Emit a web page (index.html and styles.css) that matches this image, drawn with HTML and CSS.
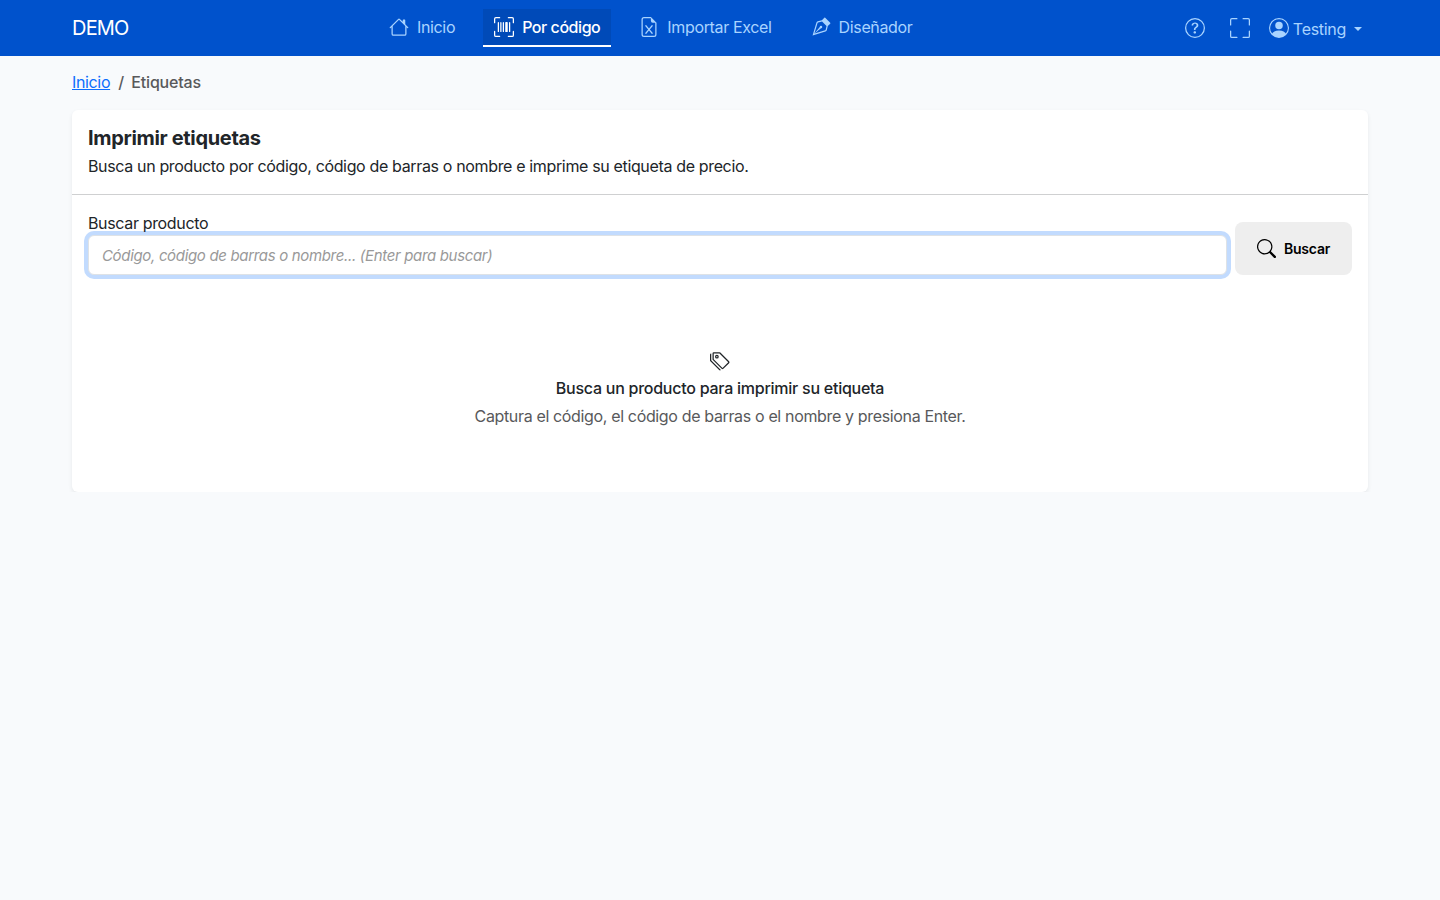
FILE: index.html
```html
<!DOCTYPE html>
<html lang="es">
<head>
    <meta charset="UTF-8">
    <meta name="viewport" content="width=device-width, initial-scale=1.0">
    <title>Imprimir etiquetas | DEMO</title>
    <link rel="stylesheet" href="styles.css">
</head>
<body>

<header class="navbar">
    <div class="container navbar-inner">
        <a class="brand" href="#">DEMO</a>

        <nav class="nav-links">
            <a class="nav-link" href="#">
                <svg class="icon" viewBox="0 0 16 16"><path d="M8.707 1.5a1 1 0 0 0-1.414 0L.646 8.146a.5.5 0 0 0 .708.708L2 8.207V13.5A1.5 1.5 0 0 0 3.5 15h9a1.5 1.5 0 0 0 1.5-1.5V8.207l.646.647a.5.5 0 0 0 .708-.708L13 5.793V2.5a.5.5 0 0 0-.5-.5h-1a.5.5 0 0 0-.5.5v1.293zM13 7.207V13.5a.5.5 0 0 1-.5.5h-9a.5.5 0 0 1-.5-.5V7.207l5-5z"/></svg>
                <span>Inicio</span>
            </a>
            <a class="nav-link active" href="#">
                <svg class="icon" viewBox="0 0 16 16"><path d="M1.5 1a.5.5 0 0 0-.5.5v3a.5.5 0 0 1-1 0v-3A1.5 1.5 0 0 1 1.5 0h3a.5.5 0 0 1 0 1zM11 .5a.5.5 0 0 1 .5-.5h3A1.5 1.5 0 0 1 16 1.5v3a.5.5 0 0 1-1 0v-3a.5.5 0 0 0-.5-.5h-3a.5.5 0 0 1-.5-.5M.5 11a.5.5 0 0 1 .5.5v3a.5.5 0 0 0 .5.5h3a.5.5 0 0 1 0 1h-3A1.5 1.5 0 0 1 0 14.5v-3a.5.5 0 0 1 .5-.5m15 0a.5.5 0 0 1 .5.5v3a1.5 1.5 0 0 1-1.5 1.5h-3a.5.5 0 0 1 0-1h3a.5.5 0 0 0 .5-.5v-3a.5.5 0 0 1 .5-.5M3 4.5a.5.5 0 0 1 1 0v7a.5.5 0 0 1-1 0zm2 0a.5.5 0 0 1 1 0v7a.5.5 0 0 1-1 0zm2 0a.5.5 0 0 1 1 0v7a.5.5 0 0 1-1 0zm2 0a.5.5 0 0 1 .5-.5h1a.5.5 0 0 1 .5.5v7a.5.5 0 0 1-.5.5h-1a.5.5 0 0 1-.5-.5zm3 0a.5.5 0 0 1 1 0v7a.5.5 0 0 1-1 0z"/></svg>
                <span>Por código</span>
            </a>
            <a class="nav-link" href="#">
                <svg class="icon" viewBox="0 0 16 16"><path d="M5.884 6.68a.5.5 0 1 0-.768.64L7.349 10l-2.233 2.68a.5.5 0 0 0 .768.64L8 10.781l2.116 2.54a.5.5 0 0 0 .768-.641L8.651 10l2.233-2.68a.5.5 0 0 0-.768-.64L8 9.219l-2.116-2.54z"/><path d="M14 14V4.5L9.5 0H4a2 2 0 0 0-2 2v12a2 2 0 0 0 2 2h8a2 2 0 0 0 2-2M9.5 3A1.5 1.5 0 0 0 11 4.5h2V14a1 1 0 0 1-1 1H4a1 1 0 0 1-1-1V2a1 1 0 0 1 1-1h5.5z"/></svg>
                <span>Importar Excel</span>
            </a>
            <a class="nav-link" href="#">
                <svg class="icon" viewBox="0 0 16 16" fill-rule="evenodd"><path d="M10.646.646a.5.5 0 0 1 .708 0l4 4a.5.5 0 0 1 0 .708l-1.902 1.902-.829 3.313a1.5 1.5 0 0 1-1.024 1.073L1.254 14.746 4.358 4.4A1.5 1.5 0 0 1 5.43 3.377l3.313-.828zm-1.8 2.908-3.173.793a.5.5 0 0 0-.358.342l-2.57 8.565 8.567-2.57a.5.5 0 0 0 .34-.357l.794-3.174-3.6-3.6z"/><path d="M2.832 13.228 8 9a1 1 0 1 0-1-1l-4.228 5.168-.026.086z"/></svg>
                <span>Diseñador</span>
            </a>
        </nav>

        <div class="nav-tools">
            <a class="tool help" href="#" title="Ayuda">
                <svg class="icon" viewBox="0 0 16 16"><path d="M8 15A7 7 0 1 1 8 1a7 7 0 0 1 0 14m0 1A8 8 0 1 0 8 0a8 8 0 0 0 0 16"/><path d="M5.255 5.786a.237.237 0 0 0 .241.247h.825c.138 0 .248-.113.266-.25.09-.656.54-1.134 1.342-1.134.686 0 1.314.343 1.314 1.168 0 .635-.374.927-.965 1.371-.673.489-1.206 1.06-1.168 1.987l.003.217a.25.25 0 0 0 .25.246h.811a.25.25 0 0 0 .25-.25v-.105c0-.718.273-.927 1.01-1.486.609-.463 1.244-.977 1.244-2.056 0-1.511-1.276-2.241-2.673-2.241-1.267 0-2.655.59-2.75 2.286m1.557 5.763c0 .533.425.927 1.01.927.609 0 1.028-.394 1.028-.927 0-.552-.42-.94-1.029-.94-.584 0-1.009.388-1.009.94"/></svg>
            </a>
            <a class="tool fullscreen" href="#" title="Pantalla completa">
                <svg class="icon" viewBox="0 0 16 16"><path d="M1.5 1a.5.5 0 0 0-.5.5v4a.5.5 0 0 1-1 0v-4A1.5 1.5 0 0 1 1.5 0h4a.5.5 0 0 1 0 1zM10 .5a.5.5 0 0 1 .5-.5h4A1.5 1.5 0 0 1 16 1.5v4a.5.5 0 0 1-1 0v-4a.5.5 0 0 0-.5-.5h-4a.5.5 0 0 1-.5-.5M.5 10a.5.5 0 0 1 .5.5v4a.5.5 0 0 0 .5.5h4a.5.5 0 0 1 0 1h-4A1.5 1.5 0 0 1 0 14.5v-4a.5.5 0 0 1 .5-.5m15 0a.5.5 0 0 1 .5.5v4a1.5 1.5 0 0 1-1.5 1.5h-4a.5.5 0 0 1 0-1h4a.5.5 0 0 0 .5-.5v-4a.5.5 0 0 1 .5-.5"/></svg>
            </a>
            <a class="tool user" href="#">
                <svg class="icon" viewBox="0 0 16 16"><path d="M11 6a3 3 0 1 1-6 0 3 3 0 0 1 6 0"/><path fill-rule="evenodd" d="M0 8a8 8 0 1 1 16 0A8 8 0 0 1 0 8m8-7a7 7 0 0 0-5.468 11.37C3.242 11.226 4.805 10 8 10s4.757 1.225 5.468 2.37A7 7 0 0 0 8 1"/></svg>
                <span class="user-name">Testing</span>
                <span class="caret"></span>
            </a>
        </div>
    </div>
</header>

<main class="container">
    <nav class="breadcrumb">
        <a href="#">Inicio</a>
        <span class="separator">/</span>
        <span class="current">Etiquetas</span>
    </nav>

    <section class="card">
        <div class="card-header">
            <h1>Imprimir etiquetas</h1>
            <p>Busca un producto por código, código de barras o nombre e imprime su etiqueta de precio.</p>
        </div>

        <div class="card-body">
            <form class="search-form">
                <div class="field">
                    <label for="search">Buscar producto</label>
                    <input id="search" type="text" placeholder="Código, código de barras o nombre... (Enter para buscar)">
                </div>
                <button class="search-btn" type="button">
                    <svg class="icon" viewBox="0 0 16 16"><path d="M11.742 10.344a6.5 6.5 0 1 0-1.397 1.398h-.001q.044.06.098.115l3.85 3.85a1 1 0 0 0 1.415-1.414l-3.85-3.85a1 1 0 0 0-.115-.1zM12 6.5a5.5 5.5 0 1 1-11 0 5.5 5.5 0 0 1 11 0"/></svg>
                    <span>Buscar</span>
                </button>
            </form>

            <div class="empty-state">
                <svg class="icon" viewBox="0 0 16 16"><path d="M3 2v4.586l7 7L14.586 9l-7-7zM2 2a1 1 0 0 1 1-1h4.586a1 1 0 0 1 .707.293l7 7a1 1 0 0 1 0 1.414l-4.586 4.586a1 1 0 0 1-1.414 0l-7-7A1 1 0 0 1 2 6.586z"/><path d="M5.5 5a.5.5 0 1 1 0-1 .5.5 0 0 1 0 1m0 1a1.5 1.5 0 1 0 0-3 1.5 1.5 0 0 0 0 3M1 7.086a1 1 0 0 0 .293.707L8.75 15.25l-.043.043a1 1 0 0 1-1.414 0l-7-7A1 1 0 0 1 0 7.586V3a1 1 0 0 1 1-1z"/></svg>
                <h2>Busca un producto para imprimir su etiqueta</h2>
                <p>Captura el código, el código de barras o el nombre y presiona Enter.</p>
            </div>
        </div>
    </section>
</main>

</body>
</html>
```
FILE: styles.css
```css
* {
    box-sizing: border-box;
}

body {
    margin: 0;
    font-family: Inter, "Liberation Sans", sans-serif;
    font-size: 16px;
    line-height: 24px;
    letter-spacing: -0.35px;
    color: #212529;
    background-color: #f8fafc;
}

h1, h2, p {
    margin: 0;
}

.container {
    width: 1296px;
    margin: 0 auto;
}

.icon {
    display: block;
    flex: none;
    width: 20px;
    height: 20px;
    fill: currentColor;
}

/* Navbar */
.navbar {
    height: 56px;
    background-color: #0052cc;
}

.navbar-inner {
    display: grid;
    grid-template-columns: 306px 1fr auto;
    height: 56px;
}

.navbar a {
    color: #a9d4ff;
    text-decoration: none;
}

.navbar .brand {
    align-self: center;
    font-size: 20px;
    letter-spacing: -0.8px;
    color: #fff;
}

.nav-links {
    display: flex;
    align-items: center;
    gap: 17px;
}

.nav-link {
    display: flex;
    align-items: center;
    gap: 8px;
    height: 38px;
    padding: 0 11px;
    border-bottom: 2px solid transparent;
}

.navbar .nav-link.active {
    color: #fff;
    font-weight: 500;
    letter-spacing: -0.45px;
    background-color: #004ab8;
    border-bottom-color: #fff;
}

.nav-tools {
    display: flex;
    align-items: center;
    padding: 0 6px 1px 0;
}

.help {
    margin-right: 25px;
}

.fullscreen {
    margin-right: 19px;
}

.user {
    display: flex;
    align-items: center;
}

.user-name {
    margin: 3px 8px 0 4px;
    letter-spacing: -0.3px;
}

.caret {
    margin-top: 3px;
    border-top: 4px solid;
    border-left: 4px solid transparent;
    border-right: 4px solid transparent;
}

/* Breadcrumb */
.breadcrumb {
    display: flex;
    gap: 8px;
    padding: 14px 0 16px;
    color: #58595b;
}

.breadcrumb a {
    color: #0d6efd;
}

.breadcrumb .separator {
    font-weight: 500;
    letter-spacing: -0.7px;
}

.breadcrumb .current {
    font-weight: 500;
    letter-spacing: -0.2px;
}

/* Card */
.card {
    height: 382px;
    background-color: #fff;
    border-radius: 6px;
    box-shadow: 0 2px 4px rgba(0, 0, 0, 0.075);
}

.card-header {
    height: 85px;
    padding: 16px 16px 0;
    border-bottom: 1px solid #cfd0d1;
}

.card-header h1 {
    margin-bottom: 4px;
    font-size: 20px;
    font-weight: 700;
    line-height: 24px;
    letter-spacing: -0.33px;
}

.card-body {
    padding: 16px;
}

.search-form {
    display: flex;
    align-items: flex-end;
    gap: 8px;
}

.field {
    flex: 1;
}

.field label {
    display: block;
}

.field input {
    display: block;
    width: 100%;
    height: 40px;
    padding: 1px 13px 0;
    font: inherit;
    font-size: 15px;
    letter-spacing: -0.33px;
    border: 1px solid #dee2e6;
    border-radius: 6px;
    outline: none;
    box-shadow: 0 0 0 4px #c2dbfe;
}

.field input::placeholder {
    color: #999;
    font-style: italic;
}

.search-btn {
    display: flex;
    align-items: center;
    justify-content: center;
    gap: 8px;
    width: 117px;
    height: 53px;
    padding: 0;
    font-family: inherit;
    font-size: 14px;
    font-weight: 600;
    letter-spacing: -0.2px;
    color: #000;
    background-color: #eee;
    border: none;
    border-radius: 8px;
}

.search-btn .icon {
    width: 19px;
    height: 19px;
}

/* Empty state */
.empty-state {
    display: flex;
    flex-direction: column;
    align-items: center;
    padding-top: 76px;
    text-align: center;
}

.empty-state h2 {
    margin: 5px 0 4px;
    font-size: 16px;
    font-weight: 500;
    line-height: 24px;
    letter-spacing: -0.25px;
}

.empty-state p {
    color: #58595b;
}
```
